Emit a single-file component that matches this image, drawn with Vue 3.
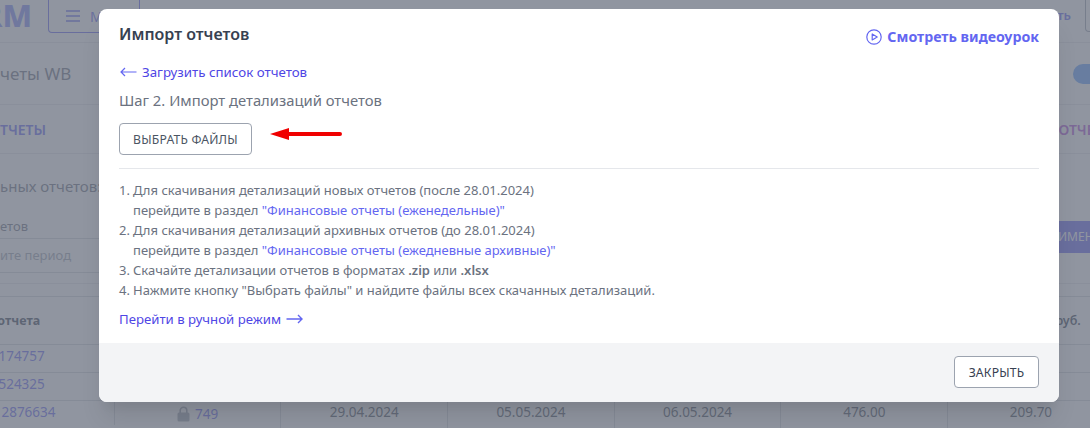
<template>
  <div class="page">
    <header class="top">
      <div class="logo">RM</div>
      <button class="menu">
        <svg width="16" height="14" viewBox="0 0 16 14"><path d="M1 2h14M1 7h14M1 12h14" stroke="#6366f1" stroke-width="1.6" fill="none"/></svg>
        <span>Меню</span>
      </button>
      <div class="spacer"></div>
      <span class="top-link">Оплатить</span>
      <div class="top-btn"></div>
    </header>
    <div class="title-row">
      <div class="page-title">четы WB</div>
      <div class="toggle"></div>
    </div>
    <div class="tabs"><span>ТЧЕТЫ</span><span class="tab-r">ОТЧЕТЫ</span></div>
    <div class="sub">ьных отчетов:</div>
    <div class="filter">
      <div class="field">
        <div class="field-label">етов</div>
        <div class="field-input">ите период</div>
      </div>
      <div class="apply">ИМЕНИТЬ</div>
    </div>
    <div class="table">
      <div class="tr head">
        <div class="c first">Номер отчета</div><div></div><div></div><div></div><div></div><div></div><div class="c rub">руб.</div>
      </div>
      <div class="tr"><div class="c first link">88174757</div><div></div><div></div><div></div><div></div><div></div><div></div></div>
      <div class="tr"><div class="c first link">88524325</div><div></div><div></div><div></div><div></div><div></div><div></div></div>
      <div class="tr">
        <div class="c first wide link">112876634</div>
        <div class="c lockcell">
          <svg width="13" height="16" viewBox="0 0 13 16"><path d="M3.2 7V4.6a3.3 3.3 0 0 1 6.6 0V7" fill="none" stroke="#9ca3af" stroke-width="1.6"/><rect x="0.5" y="6.5" width="12" height="9" rx="1.5" fill="#9ca3af"/></svg>
          <span class="link">749</span>
        </div>
        <div class="c">29.04.2024</div><div class="c">05.05.2024</div><div class="c">06.05.2024</div><div class="c">476.00</div><div class="c">209.70</div>
      </div>
    </div>

    <div class="backdrop"></div>
    <div class="modal-wrap">
      <section class="modal">
        <div class="body">
          <div class="head-row">
            <h2>Импорт отчетов</h2>
            <a class="video">
              <svg width="16" height="16" viewBox="0 0 16 16"><circle cx="8" cy="8" r="7.2" fill="none" stroke="#6366f1" stroke-width="1.2"/><path d="M6.2 5v6l5-3z" fill="none" stroke="#6366f1" stroke-width="1.2" stroke-linejoin="round"/></svg>
              Смотреть видеоурок
            </a>
          </div>
          <a class="back">
            <svg width="17" height="10" viewBox="0 0 17 10"><path d="M16.5 5H1M5 1L1 5l4 4" fill="none" stroke="#6366f1" stroke-width="1.2"/></svg>
            Загрузить список отчетов
          </a>
          <div class="step">Шаг 2. Импорт детализаций отчетов</div>
          <div class="pick-row">
            <button class="btn">ВЫБРАТЬ ФАЙЛЫ</button>
            <svg class="red" width="72" height="14" viewBox="0 0 72 14"><path d="M0 7l19-6v4h51a2 2 0 0 1 0 4H19v4z" fill="#f00000"/></svg>
          </div>
          <hr />
          <ol>
            <li><b>1.</b>Для скачивания детализаций новых отчетов (после 28.01.2024)<br />перейдите в раздел <a>"Финансовые отчеты (еженедельные)"</a></li>
            <li><b>2.</b>Для скачивания детализаций архивных отчетов (до 28.01.2024)<br />перейдите в раздел <a>"Финансовые отчеты (ежедневные архивные)"</a></li>
            <li><b>3.</b>Скачайте детализации отчетов в форматах <strong>.zip</strong> или <strong>.xlsx</strong></li>
            <li><b>4.</b>Нажмите кнопку "Выбрать файлы" и найдите файлы всех скачанных детализаций.</li>
          </ol>
          <a class="manual">
            Перейти в ручной режим
            <svg width="17" height="10" viewBox="0 0 17 10"><path d="M0.5 5H16M12 1l4 4-4 4" fill="none" stroke="#6366f1" stroke-width="1.4"/></svg>
          </a>
        </div>
        <footer>
          <button class="btn close">ЗАКРЫТЬ</button>
        </footer>
      </section>
    </div>
  </div>
</template>

<script setup>
</script>

<style>
html, body { margin: 0; overflow: hidden; }
</style>

<style scoped>
.page {
  position: relative;
  width: 1090px;
  height: 428px;
  overflow: hidden;
  background: #fff;
  font-family: "Noto Sans", "Open Sans", sans-serif;
  color: #374151;
}
.top { display: flex; align-items: flex-start; height: 42px; border-bottom: 1px solid #e5e7eb; }
.logo { width: 62px; margin-left: -30px; margin-right: 16px; flex: none; text-align: right; font: 800 31px/30px "Noto Sans", sans-serif; color: #818cf8; height: 30px; overflow: hidden; }
.menu { display: flex; align-items: center; gap: 9px; width: 92px; height: 33px; box-sizing: border-box; margin: 0; padding: 0 0 0 16px; background: none; border: 1px solid #6366f1; border-top: 0; border-radius: 0 0 4px 4px; color: #6366f1; font: 14px "Noto Sans", sans-serif; }
.spacer { flex: 1; }
.top-link { color: #6366f1; font-size: 13px; font-weight: 600; margin-top: 6px; margin-right: 14px; }
.top-btn { width: 20px; height: 32px; margin-right: -15px; box-sizing: border-box; border: 1px solid #9ca3af; border-top: 0; border-radius: 0 0 0 4px; }
.title-row { display: flex; justify-content: space-between; align-items: center; height: 61px; border-bottom: 1px solid #e5e7eb; }
.page-title { font-size: 17px; color: #6b7280; }
.toggle { width: 40px; height: 20px; margin-right: -23px; border-radius: 10px; background: #5fa0ff; }
.tabs { display: flex; justify-content: space-between; align-items: center; height: 48px; border-bottom: 1px solid #e5e7eb; font-size: 14px; font-weight: 600; color: #6366f1; overflow: hidden; }
.tab-r { color: #b04fd8; margin-right: -25px; }
.sub { height: 32px; padding-top: 21px; font-size: 15px; line-height: 22px; color: #6b7280; }
.filter { display: flex; justify-content: space-between; height: 67px; margin-top: 9px; border-bottom: 1px solid #e5e7eb; }
.field { width: 113px; }
.field-label { font-size: 13px; line-height: 20px; height: 22px; color: #6b7280; border-bottom: 1px solid #d1d5db; }
.field-input { font-size: 13px; line-height: 32px; height: 33px; color: #9ca3af; border-bottom: 1px solid #d1d5db; }
.apply { width: 60px; height: 32px; margin-right: -28px; margin-top: 5px; box-sizing: border-box; background: #6366f1; color: #fff; font-size: 12px; line-height: 32px; white-space: nowrap; overflow: hidden; }
.table { margin: 12px 0 0 -53px; width: 1167px; border-top: 1px solid #d1d5db; }
.tr { display: grid; grid-template-columns: repeat(7, 166.7px); height: 27px; border-bottom: 1px solid #d1d5db; }
.tr.head { height: 47px; }
.tr > div + div { border-left: 1px solid #d1d5db; }
.c { font-size: 13.5px; line-height: 23px; text-align: center; color: #4b5563; }
.head .c { line-height: 47px; font-weight: 700; font-size: 12.5px; color: #374151; }
.first { text-align: left !important; padding-left: 36px; white-space: nowrap; }
.first.wide { padding-left: 39px; }
.head .first { padding-left: 4px; }
.rub { text-align: right !important; padding-right: 33px; font-weight: 600 !important; }
.link { color: #6366f1; }
.lockcell { display: flex; align-items: center; justify-content: center; gap: 5px; height: 22px; padding-top: 2px; }

.backdrop { position: absolute; inset: 0; background: rgba(107, 114, 128, .75); }
.modal-wrap { position: absolute; inset: 0; padding: 9px 0 0 99px; }
.modal { width: 960px; height: 393px; background: #fff; border-radius: 8px; overflow: hidden; box-shadow: 0 20px 25px -5px rgba(0,0,0,.1), 0 10px 10px -5px rgba(0,0,0,.04); display: flex; flex-direction: column; }
.body { flex: 1; padding: 15px 20px 0; min-height: 0; }
.head-row { display: flex; justify-content: space-between; align-items: center; height: 21px; }
h2 { margin: 0; font-size: 16px; font-weight: 600; color: #374151; line-height: 21px; }
.video { display: flex; align-items: center; gap: 5px; font-size: 14.2px; font-weight: 700; color: #6366f1; margin-top: 4px; }
.back { display: flex; align-items: center; gap: 5px; margin-top: 18px; font-size: 13.3px; line-height: 18px; color: #4f46e5; padding-left: 1px; }
.step { margin-top: 9px; font-size: 14.8px; line-height: 20px; color: #6b7280; }
.pick-row { display: flex; align-items: center; gap: 18px; margin-top: 13px; }
.pick-row .red { margin-top: -11px; }
.btn { width: 133px; height: 32px; margin: 0; padding: 0; box-sizing: border-box; background: #fff; border: 1px solid #9ca3af; border-radius: 4px; font: 12.2px "Noto Sans", sans-serif; color: #4b5563; letter-spacing: .2px; }
hr { margin: 13px 0 0; border: 0; border-top: 1px solid #e5e7eb; }
ol { list-style: none; margin: 11px 0 0; padding: 0 0 0 14px; font-size: 13px; line-height: 20px; color: #6b7280; }
li { position: relative; }
li b { position: absolute; left: -14px; font-weight: 400; }
li a { color: #6366f1; }
li strong { font-weight: 600; color: #6b7280; }
.manual { display: flex; align-items: center; gap: 5px; margin-top: 10px; font-size: 13.2px; line-height: 18px; color: #4f46e5; }
footer { height: 59px; flex: none; background: #f3f4f6; display: flex; justify-content: flex-end; align-items: center; padding-right: 20px; }
.btn.close { width: 85px; height: 32px; margin-top: -1px; color: #374151; }
</style>
